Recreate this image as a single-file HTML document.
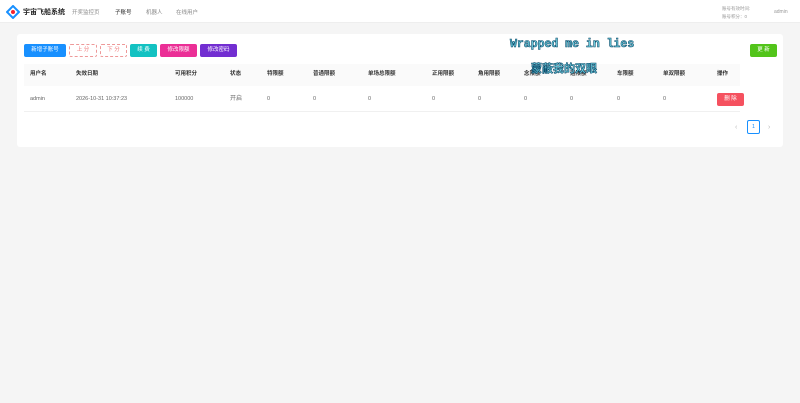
<!DOCTYPE html>
<html><head><meta charset="utf-8"><style>
*{margin:0;padding:0;box-sizing:border-box}
body{width:800px;height:403px;background:#f5f5f5;font-family:"Liberation Sans","Noto Sans CJK SC",sans-serif;position:relative;overflow:hidden;color:#333}
.hd{position:absolute;left:0;top:0;width:800px;height:23px;background:#fff;border-bottom:1px solid #eee}
.a{position:absolute;white-space:nowrap}
.card{position:absolute;left:17px;top:34px;width:766px;height:113px;background:#fff;border-radius:3px}
.btn{position:absolute;top:44px;height:13px;border-radius:2px;font-size:5.5px;color:#fff;display:flex;align-items:center;justify-content:center;line-height:1}
.th{position:absolute;left:24px;top:64px;width:716px;height:22px;background:#fafafa}
.row{position:absolute;left:24px;top:87px;width:716px;height:25px;border-bottom:1px solid #f0f0f0}
.t{position:absolute;font-size:5.5px;white-space:nowrap;line-height:1}
</style></head><body>
<div class="hd"></div>
<svg class="a" style="left:6px;top:5px" width="14" height="14" viewBox="0 0 14 14"><path d="M7 1L13 7L7 13L1 7Z" fill="none" stroke="#1890ff" stroke-width="2"/><circle cx="7" cy="7" r="2" fill="#f5222d"/></svg>
<div class="a" style="left:23px;top:7px;font-size:7px;font-weight:bold;color:#222">宇宙飞船系统</div>
<div class="a" style="left:72px;top:8px;font-size:5.5px;color:#888">开奖监控页</div>
<div class="a" style="left:115px;top:8px;font-size:5.5px;color:#222">子账号</div>
<div class="a" style="left:146px;top:8px;font-size:5.5px;color:#888">机器人</div>
<div class="a" style="left:176px;top:8px;font-size:5.5px;color:#888">在线用户</div>
<div class="a" style="left:722px;top:6px;font-size:4.5px;color:#999">账号有效时间:</div>
<div class="a" style="left:722px;top:14px;font-size:4.5px;color:#999">账号积分：0</div>
<div class="a" style="left:774px;top:9px;font-size:5px;color:#999">admin</div>
<div class="card"></div>
<div class="btn" style="left:24px;width:42px;background:#1890ff">新增子账号</div>
<div class="btn" style="left:69px;width:28px;background:#fff;border:1px dashed #e99;color:#e77">上 分</div>
<div class="btn" style="left:100px;width:27px;background:#fff;border:1px dashed #e99;color:#e77">下 分</div>
<div class="btn" style="left:130px;width:27px;background:#13c2c2">续 费</div>
<div class="btn" style="left:160px;width:37px;background:#eb2f96">修改限额</div>
<div class="btn" style="left:200px;width:37px;background:#722ed1">修改密码</div>
<div class="btn" style="left:750px;width:27px;background:#52c41a">更 新</div>
<div class="th"></div><div class="row"></div>
<div class="t" style="left:30px;top:72px;font-weight:bold">用户名</div>
<div class="t" style="left:76px;top:72px;font-weight:bold">失效日期</div>
<div class="t" style="left:175px;top:72px;font-weight:bold">可用积分</div>
<div class="t" style="left:230px;top:72px;font-weight:bold">状态</div>
<div class="t" style="left:267px;top:72px;font-weight:bold">特限额</div>
<div class="t" style="left:313px;top:72px;font-weight:bold">普通限额</div>
<div class="t" style="left:368px;top:72px;font-weight:bold">单场总限额</div>
<div class="t" style="left:432px;top:72px;font-weight:bold">正用限额</div>
<div class="t" style="left:478px;top:72px;font-weight:bold">角用限额</div>
<div class="t" style="left:524px;top:72px;font-weight:bold">念限额</div>
<div class="t" style="left:570px;top:72px;font-weight:bold">通限额</div>
<div class="t" style="left:617px;top:72px;font-weight:bold">车限额</div>
<div class="t" style="left:663px;top:72px;font-weight:bold">单双限额</div>
<div class="t" style="left:717px;top:72px;font-weight:bold">操作</div>
<div class="t" style="left:30px;top:97px;color:#666">admin</div>
<div class="t" style="left:76px;top:97px;color:#666">2026-10-31 10:37:23</div>
<div class="t" style="left:175px;top:97px;color:#666">100000</div>
<div class="t" style="left:230px;top:96px;color:#666;font-size:6px">开启</div>
<div class="t" style="left:267px;top:97px;color:#666">0</div>
<div class="t" style="left:313px;top:97px;color:#666">0</div>
<div class="t" style="left:368px;top:97px;color:#666">0</div>
<div class="t" style="left:432px;top:97px;color:#666">0</div>
<div class="t" style="left:478px;top:97px;color:#666">0</div>
<div class="t" style="left:524px;top:97px;color:#666">0</div>
<div class="t" style="left:570px;top:97px;color:#666">0</div>
<div class="t" style="left:617px;top:97px;color:#666">0</div>
<div class="t" style="left:663px;top:97px;color:#666">0</div>
<div class="btn" style="left:717px;top:93px;width:27px;background:#f5515f">删 除</div>
<div class="t" style="left:735px;top:124px;color:#bbb;font-size:7px">&lsaquo;</div>
<div class="a" style="left:747px;top:120px;width:13px;height:14px;border:1px solid #1890ff;border-radius:2px;font-size:5.5px;color:#1890ff;display:flex;align-items:center;justify-content:center">1</div>
<div class="t" style="left:768px;top:124px;color:#bbb;font-size:7px">&rsaquo;</div>
<div class="a" style="left:510px;top:38px;font-family:'Liberation Mono',monospace;font-weight:bold;font-size:11.5px;color:#6fd0e0;-webkit-text-stroke:0.6px #0b4a6a">Wrapped me in lies</div>
<div class="a" style="left:531px;top:60px;font-weight:bold;font-size:11px;color:#6fd0e0;-webkit-text-stroke:0.6px #0b4a6a">蒙蔽我的双眼</div>
</body></html>
